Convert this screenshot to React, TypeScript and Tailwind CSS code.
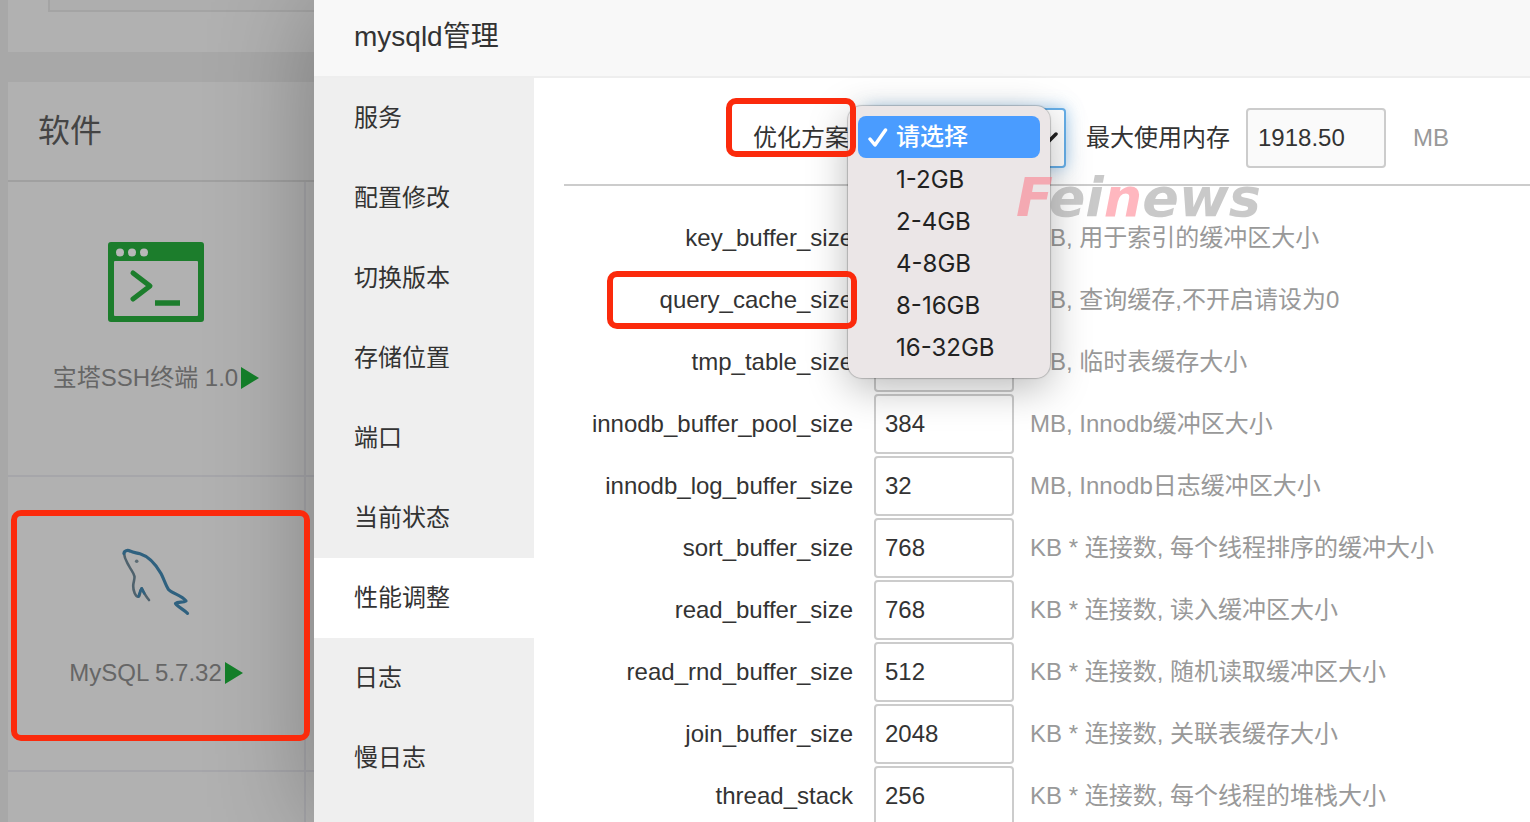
import React from "react";

const menu = ["服务", "配置修改", "切换版本", "存储位置", "端口", "当前状态", "性能调整", "日志", "慢日志"];

const plans = ["请选择", "1-2GB", "2-4GB", "4-8GB", "8-16GB", "16-32GB"];

const settings = [
  { name: "key_buffer_size", value: "128", note: "MB, 用于索引的缓冲区大小" },
  { name: "query_cache_size", value: "64", note: "MB, 查询缓存,不开启请设为0", marked: true },
  { name: "tmp_table_size", value: "64", note: "MB, 临时表缓存大小" },
  { name: "innodb_buffer_pool_size", value: "384", note: "MB, Innodb缓冲区大小" },
  { name: "innodb_log_buffer_size", value: "32", note: "MB, Innodb日志缓冲区大小" },
  { name: "sort_buffer_size", value: "768", note: "KB * 连接数, 每个线程排序的缓冲大小" },
  { name: "read_buffer_size", value: "768", note: "KB * 连接数, 读入缓冲区大小" },
  { name: "read_rnd_buffer_size", value: "512", note: "KB * 连接数, 随机读取缓冲区大小" },
  { name: "join_buffer_size", value: "2048", note: "KB * 连接数, 关联表缓存大小" },
  { name: "thread_stack", value: "256", note: "KB * 连接数, 每个线程的堆栈大小" },
];

function TerminalIcon() {
  return (
    <svg className="h-20 w-24" viewBox="0 0 96 80" aria-hidden="true">
      <path
        fill="#1c7d2c"
        fillRule="evenodd"
        d="M3 0h90a3 3 0 0 1 3 3v74a3 3 0 0 1-3 3H3a3 3 0 0 1-3-3V3a3 3 0 0 1 3-3ZM7 19a1 1 0 0 0-1 1v53a1 1 0 0 0 1 1h82a1 1 0 0 0 1-1V20a1 1 0 0 0-1-1Z"
      />
      <circle cx="12" cy="10.500" r="4" fill="#b8b8b8" />
      <circle cx="24" cy="10.500" r="4" fill="#b8b8b8" />
      <circle cx="36" cy="10.500" r="4" fill="#b8b8b8" />
      <path d="M25 31 42 44 25 57" fill="none" stroke="#1c7d2c" strokeWidth="5" strokeLinecap="round" strokeLinejoin="round" />
      <path d="M47 61h25" stroke="#1c7d2c" strokeWidth="5.500" />
    </svg>
  );
}

function DolphinIcon() {
  return (
    <svg className="size-20" viewBox="0 0 80 80" fill="none" strokeLinecap="round" strokeLinejoin="round" aria-hidden="true">
      <path
        stroke="#4f626d"
        strokeWidth="2.600"
        d="M8 16.500C8.500 22 11 25 13 29c2 4 5 7 5.500 10.500.3 3-1.300 6-1.300 9.500 0 5 2.300 10.700 5 10.700 2.300 0 1.300-5.500 3.500-8.400 1.800 3.700 4 8 7.300 11.700"
      />
      <path
        stroke="#2f617f"
        strokeWidth="3.200"
        d="M8 16.500c0-3 3.500-3.800 6.500-2.300 2.500 1.500 5.500 1.500 9.500 2.600C33 19.500 39.500 27 45 36.500c3 5.500 4.500 11.500 7.500 16 3.500 4 13 5.500 17.500 11.500-3 1.800-8 .5-10.500 2.500 2.500 3.500 8 6 12 9.800"
      />
      <path stroke="#2f617f" strokeWidth="2.600" d="M22.500 59.500c1-3.500 1.500-6 3.200-8.200l2.500 5" />
      <circle cx="20.700" cy="24.300" r="1.800" fill="#5c6c74" />
    </svg>
  );
}

function Software({ icon, name, marked }: { icon: React.ReactNode; name: string; marked?: boolean }) {
  return (
    <div className="relative flex h-[295px] flex-col items-center border-r-2 border-b-2 border-[#a6a6aa] pt-[60px]">
      {icon}
      <a href="#" className="mt-[38px] flex items-center gap-[3px] text-2xl leading-9 whitespace-nowrap text-[#666]">
        {name}
        <svg className="h-[22px] w-[18px]" viewBox="0 0 18 22" aria-hidden="true">
          <path d="M0 0 18 11 0 22Z" fill="#14802a" />
        </svg>
      </a>
      {marked && (
        <span className="pointer-events-none absolute -right-1.5 bottom-[29px] left-[3px] top-[33px] z-20 rounded-[10px] border-[6px] border-[#fb2a0c]" />
      )}
    </div>
  );
}

function Backdrop() {
  return (
    <div className="flex w-[314px] shrink-0 flex-col bg-[#a8a8a8] pl-2">
      <div className="h-[52px] shrink-0 bg-[#b1b1b1] pl-10">
        <div className="h-3 border-b-2 border-l-2 border-[#a4a4a4] bg-[#aeaeae]" />
      </div>
      <section className="mt-[30px] shrink-0 bg-[#b1b1b1]">
        <h2 className="h-[100px] border-b-2 border-[#a0a0a0] pl-[30px] text-[32px] leading-[98px] text-[#444]">软件</h2>
        <div className="grid grid-cols-[298px_1fr]">
          <Software icon={<TerminalIcon />} name="宝塔SSH终端 1.0" />
          <div className="border-b-2 border-[#a6a6aa]" />
          <Software icon={<DolphinIcon />} name="MySQL 5.7.32" marked />
          <div className="border-b-2 border-[#a6a6aa]" />
          <div className="h-[295px] border-r-2 border-[#a6a6aa]" />
        </div>
      </section>
    </div>
  );
}

function PlanPopup() {
  return (
    <ul
      role="listbox"
      aria-label="优化方案"
      className="absolute -top-0.5 -left-[18px] z-10 w-[202px] rounded-[14px] bg-[#ebe6e7] p-2.5 font-['Inter','Noto_Sans_CJK_SC',sans-serif] text-2xl leading-[44px] text-[#222] shadow-[0_0_1px_1px_rgba(0,0,0,0.2),0_10px_40px_rgba(0,0,0,0.28)]"
    >
      {plans.map((plan, i) => (
        <li
          key={plan}
          role="option"
          aria-selected={i === 0}
          className={
            i === 0
              ? "flex h-[42px] items-center rounded-lg bg-[#4a9cff] pl-2.5 font-medium text-white"
              : "h-[42px] pl-[38px]"
          }
        >
          {i === 0 && (
            <svg className="mr-2 size-5" viewBox="0 0 20 20" fill="none" aria-hidden="true">
              <path d="M2 12 7 18 17.500 3" stroke="#fff" strokeWidth="3.500" strokeLinecap="round" strokeLinejoin="round" />
            </svg>
          )}
          {plan}
        </li>
      ))}
    </ul>
  );
}

export default function App() {
  return (
    <div className="flex h-screen overflow-hidden font-['Liberation_Sans','Noto_Sans_CJK_SC',sans-serif] text-2xl text-[#333]">
      <Backdrop />
      <div role="dialog" aria-labelledby="dialog-title" className="relative flex min-w-0 flex-1 flex-col bg-white shadow-[2px_2px_100px_rgba(0,0,0,0.3)]">
        <h1 id="dialog-title" className="h-[78px] shrink-0 border-b-2 border-[#eee] bg-[#f8f8f8] pl-10 text-[28px] leading-[74px]">
          mysqld管理
        </h1>
        <div className="flex min-h-0 flex-1">
          <nav className="flex w-[220px] shrink-0 flex-col bg-[#efefef]">
            {menu.map((item) => (
              <button
                key={item}
                type="button"
                className={
                  item === "性能调整"
                    ? "h-20 shrink-0 bg-white pl-10 text-left"
                    : "h-20 shrink-0 pl-10 text-left"
                }
              >
                {item}
              </button>
            ))}
          </nav>
          <form className="relative min-w-0 flex-1 pt-[30px] pl-[30px]">
            <div className="flex h-[78px] items-start border-b-2 border-[#ccc] leading-[60px] whitespace-nowrap">
              <div className="relative w-[285px] text-right">
                <label htmlFor="plan">优化方案</label>
                <span className="pointer-events-none absolute -top-2.5 -right-[7px] z-20 h-[59px] w-[130px] rounded-[10px] border-[6px] border-[#fb2a0c]" />
              </div>
              <div className="relative ml-[17px] h-[60px] w-[200px]">
                <select
                  id="plan"
                  className="h-full w-full appearance-none rounded border-2 border-[#66afe9] bg-white pl-2.5 shadow-[0_0_16px_rgba(102,175,233,0.6)] outline-none"
                >
                  {plans.map((plan) => (
                    <option key={plan}>{plan}</option>
                  ))}
                </select>
                <svg className="absolute top-6 right-2 h-3 w-[18px]" viewBox="0 0 18 12" fill="none" aria-hidden="true">
                  <path d="m2 2 7 7 7-7" stroke="#222" strokeWidth="3.500" strokeLinecap="round" />
                </svg>
                <PlanPopup />
              </div>
              <label htmlFor="memory" className="ml-5">最大使用内存</label>
              <input
                id="memory"
                defaultValue="1918.50"
                className="ml-4 h-[60px] w-[140px] rounded border-2 border-[#ccc] bg-[#fafafa] pl-2.5 outline-none"
              />
              <span className="ml-[27px] text-[#999]">MB</span>
            </div>
            <div className="mt-[22px] flex flex-col gap-0.5">
              {settings.map((s) => (
                <div key={s.name} className="flex h-[60px] shrink-0 leading-[60px] whitespace-nowrap">
                  <div className="relative w-[289px] text-right">
                    <label htmlFor={s.name}>{s.name}</label>
                    {s.marked && (
                      <span className="pointer-events-none absolute top-px -right-1 z-20 h-[58px] w-[250px] rounded-[10px] border-[6px] border-[#fb2a0c]" />
                    )}
                  </div>
                  <input
                    id={s.name}
                    defaultValue={s.value}
                    className="ml-[21px] h-[60px] w-[140px] rounded border-2 border-[#ccc] bg-white pl-[9px] outline-none"
                  />
                  <span className="ml-4 text-[#999]">{s.note}</span>
                </div>
              ))}
            </div>
            <div
              aria-hidden="true"
              className="pointer-events-none absolute top-[90px] left-[482px] z-30 font-['DejaVu_Sans',sans-serif] text-[54px] leading-[60px] font-bold text-[#888]/45 italic"
            >
              <span className="text-[#ff6070]/45">F</span>ei<span className="text-[#ff6070]/45">n</span>ews
            </div>
          </form>
        </div>
      </div>
    </div>
  );
}
